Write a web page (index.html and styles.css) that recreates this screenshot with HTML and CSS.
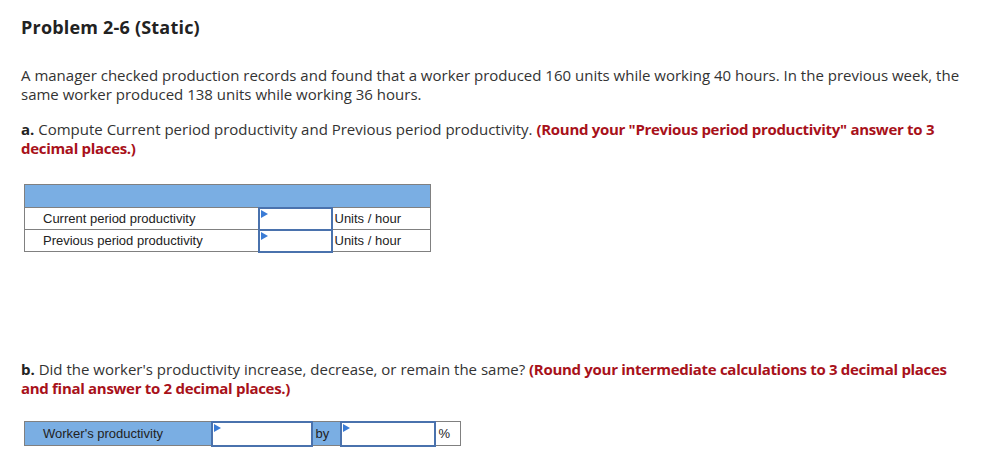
FILE: index.html
```html
<!DOCTYPE html>
<html>
<head>
<meta charset="utf-8">
<link rel="stylesheet" href="styles.css">
</head>
<body>
<div class="page">
  <h1 class="title">Problem 2-6 (Static)</h1>
  <p class="para">A manager checked production records and found that a worker produced 160 units while working 40 hours. In the previous week, the same worker produced 138 units while working 36 hours.</p>
  <p class="para q"><b>a.</b> Compute Current period productivity and Previous period productivity. <span class="red">(Round your "Previous period productivity" answer to 3 decimal places.)</span></p>
  <table class="grid ga">
    <tr class="head"><td colspan="3"></td></tr>
    <tr>
      <td class="lbl">Current period productivity</td>
      <td class="inp"><span class="flag"></span></td>
      <td class="unit">Units / hour</td>
    </tr>
    <tr>
      <td class="lbl">Previous period productivity</td>
      <td class="inp"><span class="flag"></span></td>
      <td class="unit">Units / hour</td>
    </tr>
  </table>
  <p class="para q qb"><b>b.</b> Did the worker's productivity increase, decrease, or remain the same? <span class="red">(Round your intermediate calculations to 3 decimal places and final answer to 2 decimal places.)</span></p>
  <table class="grid gb">
    <tr>
      <td class="blbl">Worker's productivity</td>
      <td class="binp1"><span class="flag"></span></td>
      <td class="by">by</td>
      <td class="binp2"><span class="flag"></span></td>
      <td class="pct">%</td>
    </tr>
  </table>
</div>
</body>
</html>
```
FILE: styles.css
```css
* { box-sizing: border-box; }
html, body { margin: 0; padding: 0; background: #fff; }
.page {
  padding: 17px 21px 0 21px;
  font-family: "Open Sans", "Lato", sans-serif;
  color: #333;
}
.title {
  margin: 0;
  font-size: 18px;
  font-weight: 700;
  letter-spacing: 0.2px;
  line-height: 20px;
  color: #222;
}
.para {
  margin: 0;
  font-size: 15px;
  letter-spacing: 0;
  line-height: 19px;
  width: 945px;
}
.title + .para { margin-top: 29px; }
.q { margin-top: 16px; }
.q b { font-weight: 700; color: #222; }
.red { color: #a8111a; font-weight: 700; letter-spacing: -0.3px; }
.grid {
  border-collapse: collapse;
  font-family: "Liberation Sans", Arial, sans-serif;
  font-size: 13px;
  color: #222;
}
.grid td { border: 1px solid #808080; padding: 0; }
.ga { margin: 26px 0 0 3px; width: 407px; }
.ga .head td { background: #7aaee3; height: 23px; }
.ga tr td { height: 22px; }
.lbl { width: 234px; padding-left: 18px !important; }
.inp { width: 73px; position: relative; border: 2px solid #4a72ad !important; }
.unit { padding-left: 2px !important; }
.flag {
  position: absolute;
  left: 1px;
  top: 1px;
  width: 0; height: 0;
  border-top: 4px solid transparent;
  border-bottom: 4px solid transparent;
  border-left: 7px solid #3a7bd5;
}
.qb { margin-top: 107px; }
.gb { margin: 23px 0 0 3px; }
.gb td { height: 24px; }
.blbl { width: 187px; background: #7aaee3; padding-left: 18px !important; }
.binp1 { width: 100px; position: relative; border: 2px solid #4a72ad !important; }
.by { width: 29px; background: #7aaee3; padding-left: 3px !important; }
.binp2 { width: 94px; position: relative; border: 2px solid #4a72ad !important; }
.pct { width: 26px; padding-left: 3px !important; }
```
